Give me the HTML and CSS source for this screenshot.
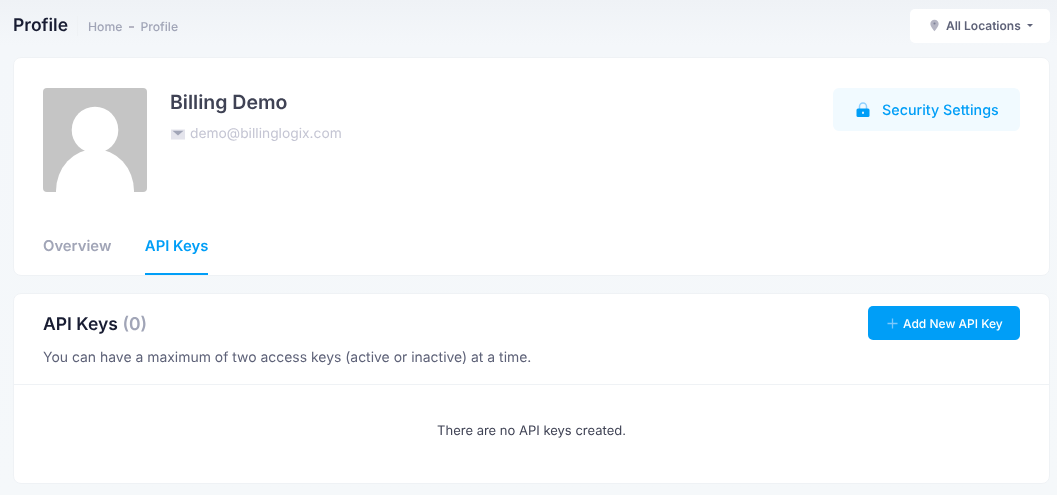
FILE: index.html
```html
<!DOCTYPE html>
<html lang="en">
<head>
<meta charset="utf-8">
<title>Profile</title>
<link rel="stylesheet" href="styles.css">
</head>
<body>
<div class="page">
  <header class="toolbar">
    <div class="crumbs">
      <h1 class="page-title">Profile</h1>
      <span class="divider"></span>
      <span class="crumb">Home</span>
      <span class="dash"></span>
      <span class="crumb">Profile</span>
    </div>
    <button class="loc-btn">
      <svg class="pin" width="9" height="13" viewBox="0 0 10 14"><path d="M5 .5C2.300.5.4 2.500.4 5c0 2.900 3 6.400 4.600 8.300C6.600 11.400 9.600 7.900 9.600 5 9.600 2.500 7.700.5 5 .5z" fill="#b5b5c3"/><circle cx="5" cy="4.800" r="1.200" fill="#7e8299"/></svg>
      <span>All Locations</span>
      <span class="caret"></span>
    </button>
  </header>

  <section class="card profile">
    <div class="profile-top">
      <div class="avatar">
        <svg width="104" height="104" viewBox="0 0 104 104"><rect width="104" height="104" fill="#c5c5c5"/><circle cx="52" cy="42" r="23.300" fill="#fff"/><ellipse cx="52" cy="103" rx="39" ry="42" fill="#fff"/></svg>
      </div>
      <div class="identity">
        <div class="name">Billing Demo</div>
        <div class="email">
          <svg width="14" height="11" viewBox="0 0 14 11"><rect y=".5" width="14" height="10" fill="#e4e4ec"/><path d="M1.500 1.800h11L7 6.500z" fill="#a1a5b7"/></svg>
          <span>demo@billinglogix.com</span>
        </div>
      </div>
      <button class="sec-btn">
        <svg width="14" height="16" viewBox="0 0 14 16"><path d="M3.500 7V4.500a3.500 3.500 0 0 1 7 0V7" fill="none" stroke="#8fd0ff" stroke-width="1.500"/><rect x=".5" y="6.500" width="13" height="8.500" rx="1.500" fill="#009ef7"/><rect x="6.200" y="9.500" width="1.600" height="2.500" rx=".8" fill="#fff"/></svg>
        <span class="sec-label">Security Settings</span>
      </button>
    </div>
    <nav class="tabs">
      <a class="tab">Overview</a>
      <a class="tab active">API Keys</a>
    </nav>
  </section>

  <section class="card keys">
    <div class="keys-head">
      <div>
        <h2 class="keys-title">API Keys <span class="count">(0)</span></h2>
        <p class="keys-note">You can have a maximum of two access keys (active or inactive) at a time.</p>
      </div>
      <button class="add-btn">
        <svg width="11" height="11" viewBox="0 0 11 11"><path d="M5.500.5v10M.5 5.500h10" stroke="#7cc8fb" stroke-width="1.300" fill="none"/></svg>
        <span>Add New API Key</span>
      </button>
    </div>
    <div class="keys-empty">There are no API keys created.</div>
  </section>
</div>
</body>
</html>
```
FILE: styles.css
```css
* { box-sizing: border-box; }
html, body { margin: 0; padding: 0; }
body {
  background: linear-gradient(180deg, #eff2f6 0, #f4f7fa 45px, #f5f8fa 100%);
  font-family: Inter, "Liberation Sans", sans-serif;
  color: #3f4254;
  height: 495px;
  overflow: hidden;
  text-rendering: geometricPrecision;
}
.page { padding: 9px 7px 0 13px; will-change: transform; }
button { font-family: inherit; border: 0; cursor: pointer; text-rendering: inherit; }

.toolbar {
  display: flex;
  align-items: center;
  justify-content: space-between;
  height: 34px;
  margin-bottom: 14px;
}
.crumbs { display: flex; align-items: center; }
.page-title {
  margin: 0 0 1px;
  font-size: 17.55px;
  font-weight: 600;
  color: #181c32;
}
.divider {
  width: 1px;
  height: 20px;
  background: #eff2f5;
  margin: 0 10px 0 9px;
}
.crumb { font-size: 12.2px; font-weight: 500; color: #a1a5b7; }
.dash {
  width: 5px;
  height: 2px;
  background: #b5b5c3;
  margin: 1px 6.500px 0;
}
.loc-btn {
  width: 140px;
  height: 34px;
  background: #fff;
  border-radius: 5px;
  display: flex;
  align-items: center;
  padding: 0 0 1px 20px;
  font-size: 12px;
  font-weight: 600;
  color: #5e6278;
}
.pin { margin-right: 7px; }
.caret {
  margin-left: 6px;
  border-left: 3.500px solid transparent;
  border-right: 3.500px solid transparent;
  border-top: 3.500px solid #5e6278;
}

.card {
  background: #fff;
  border: 1px solid #eff2f5;
  border-radius: 8px;
  width: 1037px;
}
.profile { height: 219px; padding: 30px 29px 0; margin-bottom: 17px; }
.profile-top { display: flex; align-items: flex-start; height: 104px; }
.avatar { width: 104px; height: 104px; border-radius: 4px; overflow: hidden; flex: none; }
.avatar svg { display: block; }
.identity { margin-left: 23px; flex: 1; }
.name {
  font-size: 19.5px;
  line-height: 22px;
  font-weight: 600;
  color: #3f4254;
  margin-top: 3px;
}
.email {
  display: flex;
  align-items: center;
  gap: 5px;
  margin: 13px 0 0 1px;
  font-size: 13.8px;
  line-height: 17px;
  color: #c4c5d3;
}
.sec-btn {
  width: 187px;
  height: 43px;
  background: #f1faff;
  border-radius: 6px;
  color: #009ef7;
  font-size: 14.3px;
  font-weight: 500;
  display: flex;
  align-items: center;
  padding: 0 0 0 23px;
  gap: 12px;
}
.sec-label { margin-top: 1px; }
.tabs {
  display: flex;
  gap: 33.500px;
  margin-top: 23px;
}
.tab {
  height: 60px;
  line-height: 62px;
  font-size: 14.85px;
  font-weight: 600;
  color: #a1a5b7;
}
.tab.active {
  color: #009ef7;
  border-bottom: 2px solid #009ef7;
}

.keys { height: 191px; }
.keys-head {
  height: 91px;
  padding: 12px 29px 0;
  border-bottom: 1px solid #eff2f5;
  display: flex;
  justify-content: space-between;
  align-items: flex-start;
}
.keys-title {
  margin: 9px 0 0;
  font-size: 17.55px;
  line-height: 20px;
  font-weight: 600;
  color: #181c32;
}
.count { color: #a1a5b7; }
.keys-note {
  margin: 14px 0 0;
  font-size: 13.95px;
  line-height: 17px;
  color: #5e6278;
}
.add-btn {
  width: 152px;
  height: 34px;
  background: #009ef7;
  border-radius: 5px;
  color: #fff;
  font-size: 12px;
  font-weight: 500;
  display: flex;
  align-items: center;
  padding: 0 0 0 19px;
  gap: 5px;
}
.keys-empty {
  text-align: center;
  font-size: 13px;
  color: #3f4254;
  padding-top: 39px;
  line-height: 15px;
}
```
